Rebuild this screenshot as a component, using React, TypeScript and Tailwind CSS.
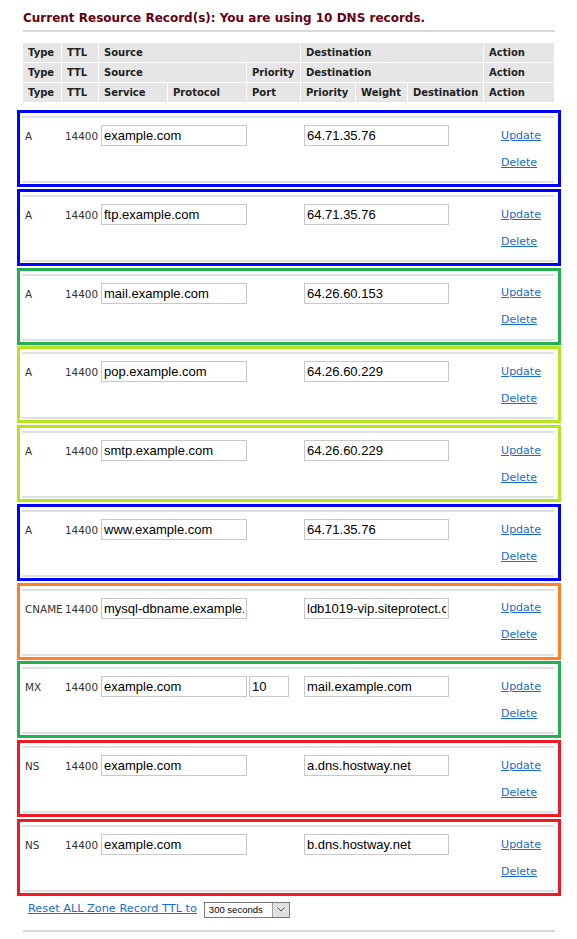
const records = [
  { type: 'A', source: 'example.com', dest: '64.71.35.76', color: 'border-[#0000ff]' },
  { type: 'A', source: 'ftp.example.com', dest: '64.71.35.76', color: 'border-[#0000ff]' },
  { type: 'A', source: 'mail.example.com', dest: '64.26.60.153', color: 'border-[#22b14c]' },
  { type: 'A', source: 'pop.example.com', dest: '64.26.60.229', color: 'border-[#b5e61d]' },
  { type: 'A', source: 'smtp.example.com', dest: '64.26.60.229', color: 'border-[#b5e61d]' },
  { type: 'A', source: 'www.example.com', dest: '64.71.35.76', color: 'border-[#0000ff]' },
  { type: 'CNAME', source: 'mysql-dbname.example.com', dest: 'ldb1019-vip.siteprotect.com', color: 'border-[#ff7f27]' },
  { type: 'MX', source: 'example.com', priority: '10', dest: 'mail.example.com', color: 'border-[#22b14c]' },
  { type: 'NS', source: 'example.com', dest: 'a.dns.hostway.net', color: 'border-[#ed1c24]' },
  { type: 'NS', source: 'example.com', dest: 'b.dns.hostway.net', color: 'border-[#ed1c24]' },
];

const cell = 'flex h-[19px] items-center bg-[#e6e6e6] pl-[5px]';

function Field({ value, width }: { value: string; width: string }) {
  return (
    <input
      readOnly
      value={value}
      className={`${width} h-[21px] border border-[#c8c8c8] bg-white px-[2px] font-['Liberation_Sans',Arial,sans-serif] text-[13px] text-black outline-none`}
    />
  );
}

function RecordBox({ r }: { r: (typeof records)[number] }) {
  return (
    <div className={`flex h-[77px] flex-col border-[3px] ${r.color} bg-white px-[2px] pt-[3px] pb-[1px]`}>
      <div className="h-[2px] w-[532px] bg-[#e0e0e0]" />
      <div className="grid h-[34px] grid-cols-[40px_37px_149px_54px_182px_74px] items-center">
        <span className="translate-y-[2px] pl-[3px] text-[10.4px] text-[#333]">{r.type}</span>
        <span className="translate-y-[2px] pr-[1px] text-right text-[10.4px] text-[#333]">14400</span>
        <div className="pl-[2px]">
          <Field value={r.source} width="w-[146px]" />
        </div>
        <div className="pl-[1px]">{r.priority && <Field value={r.priority} width="w-[40px]" />}</div>
        <div className="pl-[2px]">
          <Field value={r.dest} width="w-[145px]" />
        </div>
        <a className="translate-y-[1px] text-center text-[11px] text-[#1a6dcc] underline">Update</a>
      </div>
      <div className="flex h-[20px] translate-y-[1px] items-center justify-end">
        <a className="w-[74px] text-center text-[11px] text-[#1a6dcc] underline">Delete</a>
      </div>
      <div className="flex-1" />
      <div className="h-[2px] w-[532px] bg-[#e0e0e0]" />
    </div>
  );
}

export default function App() {
  return (
    <div className="min-h-screen bg-white pt-[10px] font-['DejaVu_Sans',Verdana,sans-serif]">
      <h1 className="ml-[23px] h-[16px] text-[12px] leading-[16px] font-bold text-[#660011]">
        Current Resource Record(s): You are using 10 DNS records.
      </h1>
      <div className="mt-[4px] ml-[23px] h-[2px] w-[532px] bg-[#d9d9d9]" />

      <div className="mt-[11px] ml-[23px] grid w-[531px] grid-cols-[38px_36px_68px_78px_53px_54px_51px_75px_70px] gap-[1px] text-[10px] font-bold text-[#222]">
        <div className={cell}>Type</div>
        <div className={cell}>TTL</div>
        <div className={`${cell} col-span-3`}>Source</div>
        <div className={`${cell} col-span-3`}>Destination</div>
        <div className={cell}>Action</div>

        <div className={cell}>Type</div>
        <div className={cell}>TTL</div>
        <div className={`${cell} col-span-2`}>Source</div>
        <div className={cell}>Priority</div>
        <div className={`${cell} col-span-3`}>Destination</div>
        <div className={cell}>Action</div>

        <div className={cell}>Type</div>
        <div className={cell}>TTL</div>
        <div className={cell}>Service</div>
        <div className={cell}>Protocol</div>
        <div className={cell}>Port</div>
        <div className={cell}>Priority</div>
        <div className={cell}>Weight</div>
        <div className={cell}>Destination</div>
        <div className={cell}>Action</div>
      </div>

      <div className="mt-[8px] ml-[17px] flex w-[544px] flex-col gap-[1.75px]">
        {records.map((r, i) => (
          <RecordBox key={i} r={r} />
        ))}
      </div>

      <div className="mt-[6px] ml-[28px] flex h-[16px] items-center gap-[7px]">
        <a className="text-[11.3px] text-[#1a6dcc] underline">Reset ALL Zone Record TTL to</a>
        <div className="flex h-[16px] w-[86px] items-stretch border border-[#7a7a7a] bg-white">
          <span className="flex flex-1 items-center pl-[4px] font-['Liberation_Sans',Arial,sans-serif] text-[9.5px] text-black">
            300 seconds
          </span>
          <span className="flex w-[17px] items-center justify-center border-l border-[#a0a0a0] bg-[#e1e1e1]">
            <svg width="8" height="5" viewBox="0 0 8 5">
              <path d="M0.5 0.5 L4 4 L7.5 0.5" fill="none" stroke="#555" strokeWidth="1" />
            </svg>
          </span>
        </div>
      </div>

      <div className="mt-[12px] ml-[23px] h-[2px] w-[532px] bg-[#d9d9d9]" />
    </div>
  );
}
